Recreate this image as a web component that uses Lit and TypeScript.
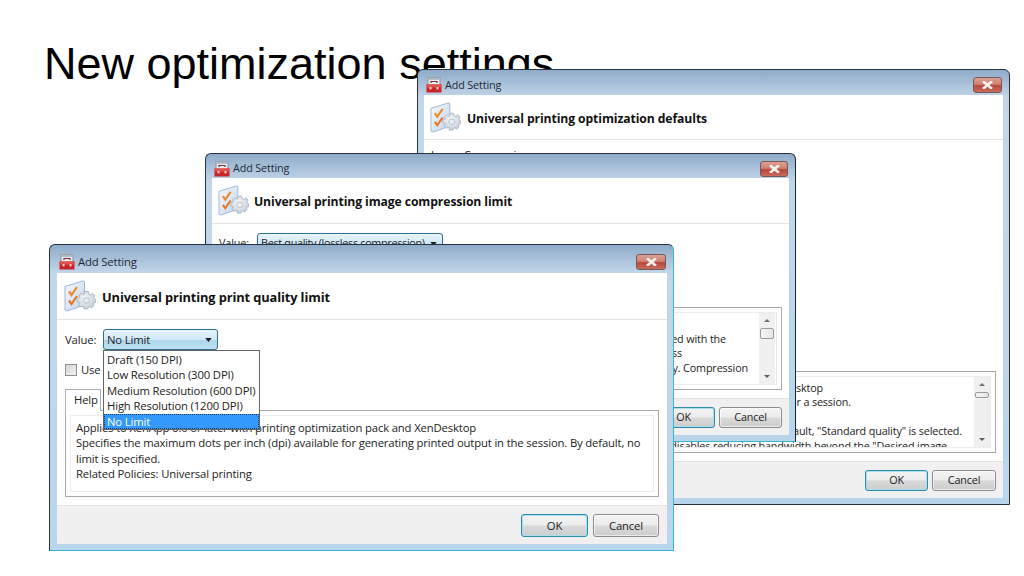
import { LitElement, html, css, svg } from "lit";
import { customElement } from "lit/decorators.js";

const toolbox = svg`<svg class="tbicon" viewBox="0 0 16 16">
  <rect x="2" y="0.5" width="12" height="8" fill="#e8edf2" stroke="#8a8f98" stroke-width="1"/>
  <rect x="2" y="0.5" width="12" height="2.4" fill="#aeb8c6"/>
  <path d="M5 6V4.5h6V6" fill="none" stroke="#7b3030" stroke-width="1.2"/>
  <path d="M0.5 7.5 L15.5 7.5 L15.5 15.5 L0.5 15.5 Z" fill="#c8242a"/>
  <path d="M0.5 7.5 L15.5 7.5 L15.5 10.5 L0.5 10.5 Z" fill="#e2504d"/>
  <rect x="3.5" y="10" width="2" height="2.4" fill="#f3d6c8"/>
  <rect x="10.5" y="10" width="2" height="2.4" fill="#f3d6c8"/>
</svg>`;

const headIcon = svg`<svg class="hicon" viewBox="0 0 32 32">
  <defs>
    <linearGradient id="pg" x1="0" y1="0" x2="1" y2="1">
      <stop offset="0" stop-color="#f6f9fd"/><stop offset="1" stop-color="#c2d4ec"/>
    </linearGradient>
    <radialGradient id="gr" cx="0.45" cy="0.4" r="0.7">
      <stop offset="0" stop-color="#f8fafb"/><stop offset="1" stop-color="#bcc6d1"/>
    </radialGradient>
  </defs>
  <path d="M1 6.5 L19.5 0.8 L20.5 2 L20.5 25 L3 31 L1 30 Z" fill="url(#pg)" stroke="#a3b8d6" stroke-width="1"/>
  <path d="M5 11.5 L7.5 15 L13 7" fill="none" stroke="#ec8a26" stroke-width="2.2"/>
  <path d="M5 20.5 L7.5 24 L13 16" fill="none" stroke="#e9761e" stroke-width="2.2"/>
  <path d="M21 11.5 L24.5 11.5 L25 14.5 L27 14.8 L28.4 13.2 L31 15.6 L29.8 17.6 L31.6 19.5 L31.6 22.5 L29.4 23 L30 25.6 L27.4 28 L25.4 26.4 L23.6 29 L20 29 L19.6 26.2 L17 27 L14.4 24.6 L15.8 22.6 L13 21.6 L13 18.2 L15.8 17.6 L15 15.2 L17.6 13.2 L19.6 14.8 Z" fill="url(#gr)" stroke="#a5b1bf" stroke-width="0.8"/>
  <ellipse cx="22.4" cy="20.4" rx="3.2" ry="2.8" fill="#e6ebf0" stroke="#aeb8c4" stroke-width="0.8"/>
</svg>`;

const arrow = html`<svg class="arrow" viewBox="0 0 8 5"><path d="M0 0H8L4 5Z" fill="#1c1c1c"/></svg>`;

interface Line { t: string; gap: number }

@customElement("app-root")
export class AppRoot extends LitElement {
  static styles = css`
    :host {
      display: block;
      width: 1024px;
      height: 576px;
      position: relative;
      overflow: hidden;
      background: #fff;
      font-family: "Open Sans", "Noto Sans", sans-serif;
      color: #222;
    }
    .slide-title {
      margin: 0;
      padding: 37px 0 0 44px;
      font: 400 45px/54px "Liberation Sans", Arial, sans-serif;
      color: #000;
    }
    .win {
      position: absolute;
      box-sizing: border-box;
      display: flex;
      flex-direction: column;
      padding: 0 6px 6px;
      border: 1px solid #26323e;
      border-radius: 6px 6px 0 0;
      background: linear-gradient(#8fabc9 0, #c3d6e9 28px, #b9d5ec 100%);
      font-size: var(--fs);
      line-height: var(--lh);
      letter-spacing: var(--ls);
    }
    .w1 { left: 417px; top: 69px; width: 593px; height: 436px; --fs: 10.8px; --ls: -0.14px; --lh: 14.4px; --titlebar: 25px; --hh: 44px; --ih: 31px; --foot: 37px; --btnh: 21px; --okw: 63px; --cw: 64px; --px: 7px; --closew: 29px; --tfs: 12.2px; --hpad: 6px; --hgap: 6px; }
    .w2 { left: 205px; top: 153px; width: 591px; height: 289px; --fs: 10.8px; --ls: -0.14px; --lh: 14.5px; --titlebar: 24px; --hh: 45px; --ih: 31px; --foot: 37px; --btnh: 21px; --okw: 63px; --cw: 63px; --px: 7px; --closew: 28px; --tfs: 12.2px; --hpad: 6px; --hgap: 5px; }
    .w3 { left: 49px; top: 244px; width: 625px; height: 307px; --fs: 11.3px; --ls: -0.15px; --lh: 15.4px; --titlebar: 28px; --hh: 46px; --ih: 32px; --foot: 39px; --btnh: 23px; --okw: 67px; --cw: 66px; --px: 8px; --closew: 30px; --tfs: 12.8px; --hpad: 7px; --hgap: 6px; border-right-color: #35b7cd; border-bottom-color: #35b7cd; padding-left: 7px; }
    .w2 { border-bottom-color: #35b7cd; border-right-color: #0c2a3f; }
    .titlebar {
      height: var(--titlebar);
      box-sizing: border-box;
      padding-top: 5px;
      flex: none;
      display: flex;
      align-items: center;
      gap: 3px;
      color: #1d2a36;
    }
    .tbicon { width: 16px; height: 16px; margin-left: 2px; flex: none; }
    .close {
      margin-left: auto;
      margin-right: 1px;
      width: var(--closew);
      height: 16px;
      box-sizing: border-box;
      border: 1px solid #75585a;
      border-radius: 3px;
      background: linear-gradient(#d9a193 0, #d08172 45%, #b8463a 55%, #c76e5e 100%);
      display: flex;
      align-items: center;
      justify-content: center;
    }
    .close svg { width: 11px; height: 8px; }
    .client {
      flex: 1;
      min-height: 0;
      background: #fff;
      display: flex;
      flex-direction: column;
    }
    .head {
      height: var(--hh);
      flex: none;
      box-sizing: content-box;
      border-bottom: 1px solid #e2e2e2;
      display: flex;
      align-items: center;
      padding-left: var(--hpad);
      gap: var(--hgap);
    }
    .hicon { width: var(--ih); height: var(--ih); flex: none; }
    .htitle { font-weight: 700; font-size: var(--tfs); color: #111; letter-spacing: -0.1px; padding-top: 4px; }
    .body {
      flex: 1;
      min-height: 0;
      display: flex;
      flex-direction: column;
      padding: 9px var(--px) 8px;
    }
    .w1 .body, .w2 .body { padding-left: 7px; padding-top: 9px; }
    .value-row { display: flex; align-items: center; gap: 7px; position: relative; }
    .value-label { width: 31px; flex: none; white-space: nowrap; }
    .combo {
      box-sizing: border-box;
      height: 21px;
      border: 1px solid #2f6f92;
      border-radius: 3px;
      background: linear-gradient(#e8f5fc 0, #cfe8f6 50%, #aed6ec 55%, #bfe0f1 100%);
      display: flex;
      align-items: center;
      justify-content: space-between;
      padding: 0 5px 0 3px;
      white-space: nowrap;
    }
    .w3 .combo { width: 115px; }
    .w2 .combo { width: 186px; letter-spacing: -0.3px; }
    .arrow { width: 7px; height: 4px; margin-right: 0; flex: none; }
    .dropdown {
      position: absolute;
      left: 38px;
      top: 21px;
      z-index: 3;
      width: 157px;
      box-sizing: border-box;
      border: 1px solid #646464;
      background: #fff;
      padding-top: 1px;
    }
    .opt { height: 15.4px; line-height: 15.4px; padding-left: 3px; white-space: nowrap; }
    .opt.sel { background: #3399ff; color: #fff; outline: 1px dotted #123f6e; outline-offset: -1px; }
    .check-row { display: flex; align-items: center; gap: 4px; margin-top: 12px; }
    .check {
      width: 12px; height: 12px; box-sizing: border-box;
      border: 1px solid #8e8f8f;
      background: linear-gradient(135deg, #d6d6d6, #f2f2f2);
    }
    .tabs { margin-top: auto; display: flex; flex-direction: column; }
    .tab {
      align-self: flex-start;
      box-sizing: border-box;
      width: 36px;
      height: 22px;
      margin-bottom: -1px;
      position: relative;
      z-index: 1;
      border: 1px solid #b0b0b0;
      border-bottom: none;
      background: #fff;
      padding: 2px 0 0 8px;
    }
    .panel {
      box-sizing: border-box;
      border: 1px solid #a8a8a8;
      padding: 4px;
      background: #fff;
    }
    .w3 .panel { height: 87px; }
    .w2 .panel { height: 83px; }
    .w1 .panel { height: 82px; }
    .box {
      height: 100%;
      box-sizing: border-box;
      border: 1px solid #ececec;
      display: flex;
      overflow: hidden;
    }
    .text { flex: 1; min-width: 0; padding: 4px 0 0 5px; overflow: hidden; }
    .line { display: flex; justify-content: flex-end; height: var(--lh); white-space: nowrap; }
    .w3 .line { justify-content: flex-start; }
    .sb {
      width: 16px;
      flex: none;
      background: #f0f0f0;
      display: flex;
      flex-direction: column;
      align-items: center;
      position: relative;
    }
    .w2 .box { padding: 0 1px 0 0; }
    .sb-up, .sb-dn {
      width: 0; height: 0;
      border-left: 3px solid transparent;
      border-right: 3px solid transparent;
    }
    .sb-up { border-bottom: 3px solid #6f6f6f; margin-top: 6px; }
    .sb-dn { border-top: 3px solid #5a5a5a; margin-top: auto; margin-bottom: 6px; }
    .thumb {
      box-sizing: border-box;
      width: 14px;
      border: 1px solid #9b9b9b;
      border-radius: 2px;
      background: linear-gradient(90deg, #f6f6f6, #e4e4e4);
    }
    .w2 .thumb { height: 11px; margin-top: 6px; }
    .w1 .thumb { height: 6px; margin-top: 6px; }
    .foot {
      height: var(--foot);
      flex: none;
      background: #f0f0f0;
      border-top: 1px solid #e4e4e4;
      box-sizing: border-box;
      display: flex;
      justify-content: flex-end;
      align-items: flex-start;
      gap: 4px;
      padding: 8px var(--px) 0 0;
    }
    .w3 .foot { gap: 5px; }
    .btn {
      box-sizing: border-box;
      height: var(--btnh);
      border: 1px solid #8c8c8c;
      border-radius: 3px;
      background: linear-gradient(#f4f4f4 0, #ebebeb 48%, #d9d9d9 52%, #cdcdcd 100%);
      display: flex;
      align-items: center;
      justify-content: center;
      box-shadow: inset 0 0 0 1px rgba(255,255,255,.6);
      width: var(--cw);
    }
    .btn.ok {
      width: var(--okw);
      border-color: #2f8aa8;
      box-shadow: inset 0 0 0 1px #a6e0f2;
    }
    .label-top { margin-top: -1px; }
  `;

  private closeBtn() {
    return html`<div class="close">
      <svg viewBox="0 0 11 8"><path d="M2 1 L9 7 M9 1 L2 7" stroke="#f5f1f0" stroke-width="2.6" stroke-linecap="square"/></svg>
    </div>`;
  }

  private chrome(cls: string, title: string, body: unknown) {
    return html`<section class="win ${cls}">
      <div class="titlebar">${toolbox}<span>Add Setting</span>${this.closeBtn()}</div>
      <div class="client">
        <div class="head">${headIcon}<span class="htitle">${title}</span></div>
        <div class="body">${body}</div>
        <div class="foot">
          <div class="btn ok">OK</div>
          <div class="btn">Cancel</div>
        </div>
      </div>
    </section>`;
  }

  private lines(items: Line[]) {
    return items.map(
      (l) => html`<div class="line" style="padding-right:${l.gap}px">${l.t}</div>`
    );
  }

  private scrollbar() {
    return html`<div class="sb"><div class="sb-up"></div><div class="thumb"></div><div class="sb-dn"></div></div>`;
  }

  render() {
    const w1Lines: Line[] = [
      { t: "Applies to XenApp 6.0 or later with printing optimization pack and XenDesktop", gap: 151 },
      { t: "Specifies the default settings used for universal printing for a session.", gap: 123 },
      { t: "\u00a0", gap: 0 },
      { t: "By default, \"Standard quality\" is selected.", gap: 12 },
      { t: "disables reducing bandwidth beyond the \"Desired image", gap: 27 },
    ];
    const w2Lines: Line[] = [
      { t: "\u00a0", gap: 0 },
      { t: "Specifies the maximum quality for images compressed with the", gap: 33 },
      { t: "universal printing driver, using lossless", gap: 77 },
      { t: "compression is applied to the image only. Compression", gap: 11 },
    ];
    const w3Lines: Line[] = [
      { t: "Applies to XenApp 6.0 or later with printing optimization pack and XenDesktop", gap: 0 },
      { t: "Specifies the maximum dots per inch (dpi) available for generating printed output in the session. By default, no", gap: 0 },
      { t: "limit is specified.", gap: 0 },
      { t: "Related Policies: Universal printing", gap: 0 },
    ];
    return html`
      <h1 class="slide-title">New optimization settings</h1>

      ${this.chrome(
        "w1",
        "Universal printing optimization defaults",
        html`<div class="label-top">Image Compression</div>
          <div class="tabs">
            <div class="panel">
              <div class="box">
                <div class="text">${this.lines(w1Lines)}</div>
                ${this.scrollbar()}
              </div>
            </div>
          </div>`
      )}

      ${this.chrome(
        "w2",
        "Universal printing image compression limit",
        html`<div class="value-row">
            <span class="value-label">Value:</span>
            <div class="combo"><span>Best quality (lossless compression)</span>${arrow}</div>
          </div>
          <div class="tabs">
            <div class="panel">
              <div class="box">
                <div class="text">${this.lines(w2Lines)}</div>
                ${this.scrollbar()}
              </div>
            </div>
          </div>`
      )}

      ${this.chrome(
        "w3",
        "Universal printing print quality limit",
        html`<div class="value-row">
            <span class="value-label">Value:</span>
            <div class="combo"><span>No Limit</span>${arrow}</div>
            <div class="dropdown">
              <div class="opt">Draft (150 DPI)</div>
              <div class="opt">Low Resolution (300 DPI)</div>
              <div class="opt">Medium Resolution (600 DPI)</div>
              <div class="opt">High Resolution (1200 DPI)</div>
              <div class="opt sel">No Limit</div>
            </div>
          </div>
          <div class="check-row"><div class="check"></div><span>Use</span></div>
          <div class="tabs">
            <div class="tab">Help</div>
            <div class="panel">
              <div class="box"><div class="text">${this.lines(w3Lines)}</div></div>
            </div>
          </div>`
      )}
    `;
  }
}
